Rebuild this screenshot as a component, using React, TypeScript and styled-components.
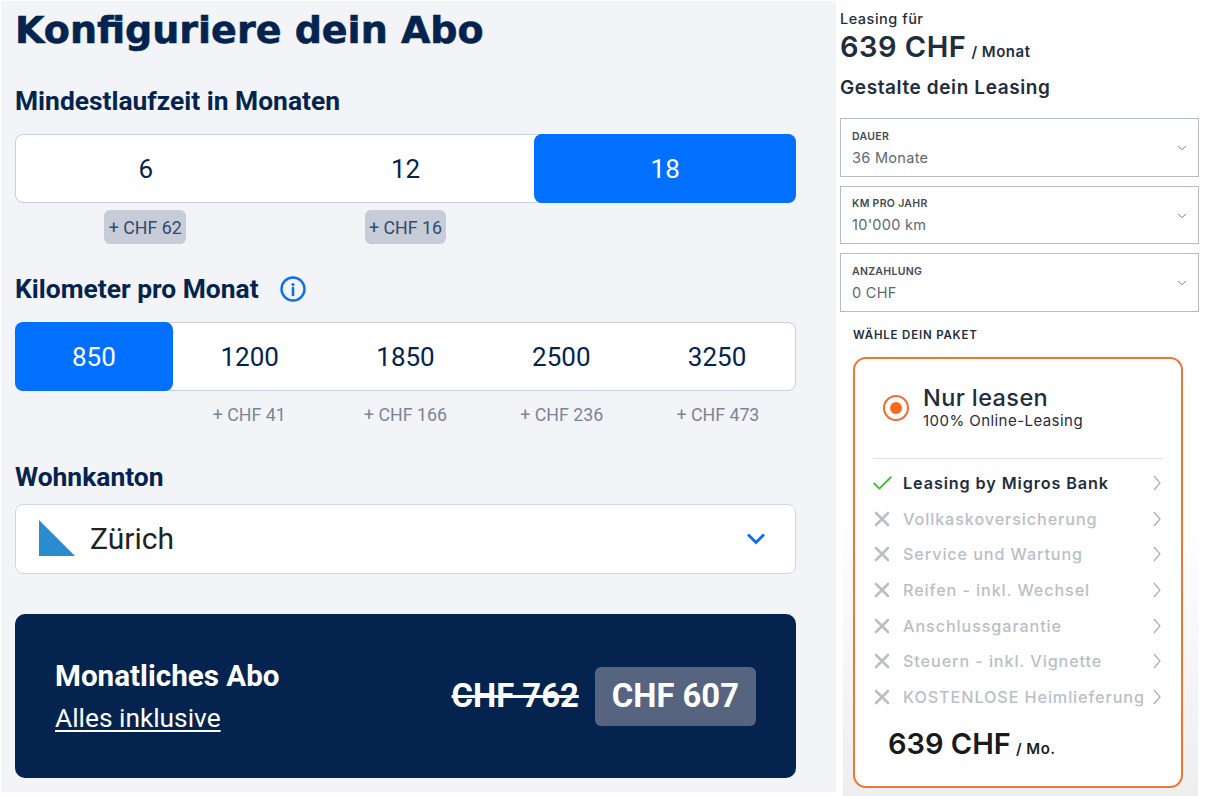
import { createGlobalStyle } from "styled-components";
import styled from "styled-components";
import { Check, ChevronDown, X } from "lucide-react";

const Global = createGlobalStyle`
  html, body {
    margin: 0;
    padding: 0;
    background: #fff;
  }
  * {
    box-sizing: border-box;
  }
`;

const Page = styled.div`
  width: 1206px;
  height: 796px;
  overflow: hidden;
  display: flex;
  align-items: flex-start;
  background: #fff;
`;

const Configurator = styled.section`
  width: 835px;
  height: 791px;
  margin: 1px 0 0 1px;
  padding: 0 40px 0 14px;
  background: #f2f4f8;
  color: #04244f;
  font-family: Roboto, sans-serif;
`;

const Title = styled.h1`
  margin: 0;
  height: 58px;
  font-family: "DejaVu Sans", sans-serif;
  font-size: 38px;
  line-height: 59px;
  font-weight: 700;
  -webkit-text-stroke: 0.6px #04244f;
  white-space: nowrap;
`;

const SectionTitle = styled.h2`
  display: flex;
  align-items: center;
  gap: 21px;
  margin: 0;
  height: 32px;
  font-size: 26.4px;
  line-height: 32px;
  font-weight: 700;
`;

const DurationBlock = styled.div`
  margin-top: 26px;
`;

const KilometerBlock = styled.div`
  margin-top: 29px;
`;

const CantonBlock = styled.div`
  margin-top: 29px;
`;

const Segments = styled.div<{ $count: number }>`
  display: grid;
  grid-template-columns: repeat(${(p) => p.$count}, 1fr);
  height: 69px;
  margin-top: 17px;
  background: #fff;
  border: 1px solid #c9ced8;
  border-radius: 8px;
`;

const Segment = styled.div<{ $active?: boolean }>`
  display: flex;
  align-items: center;
  justify-content: center;
  margin: ${(p) => (p.$active ? "-1px" : "0")};
  border-radius: 8px;
  font-size: 26px;
  background: ${(p) => (p.$active ? "#0270ff" : "transparent")};
  color: ${(p) => (p.$active ? "#fff" : "#04244f")};
`;

const Surcharges = styled.div<{ $count: number }>`
  display: grid;
  grid-template-columns: repeat(${(p) => p.$count}, 1fr);
  justify-items: center;
  height: 34px;
  margin-top: 7px;
`;

const Surcharge = styled.span<{ $badge?: boolean }>`
  display: flex;
  align-items: center;
  justify-content: center;
  height: ${(p) => (p.$badge ? "34px" : "32px")};
  padding: 0 4.5px;
  border-radius: 6px;
  font-size: 17.8px;
  background: ${(p) => (p.$badge ? "#c6ccd8" : "transparent")};
  color: ${(p) => (p.$badge ? "#33496c" : "#7b8596")};
`;

const CantonSelect = styled.div`
  display: flex;
  align-items: center;
  gap: 14px;
  height: 70px;
  margin-top: 11px;
  padding: 0 29px 2px 22px;
  background: #fff;
  border: 1px solid #d3d7de;
  border-radius: 8px;
  color: #222;
  font-size: 30px;
`;

const CantonName = styled.span`
  flex: 1;
`;

const Banner = styled.div`
  display: flex;
  align-items: center;
  justify-content: space-between;
  height: 164px;
  margin-top: 40px;
  padding: 0 40px;
  background: #04244f;
  border-radius: 10px;
  color: #fff;
`;

const BannerTitle = styled.div`
  font-size: 29.6px;
  line-height: 36px;
  font-weight: 700;
`;

const BannerLink = styled.a`
  display: inline-block;
  margin-top: 8px;
  font-size: 26.3px;
  line-height: 32px;
  text-decoration: underline;
  text-underline-offset: 3px;
`;

const Prices = styled.div`
  display: flex;
  align-items: center;
  gap: 16px;
`;

const OldPrice = styled.span`
  font-size: 32.8px;
  font-weight: 700;
  text-decoration: line-through;
`;

const NewPrice = styled.span`
  display: flex;
  align-items: center;
  height: 59px;
  padding: 0 17px;
  background: #56647f;
  border-radius: 6px;
  font-size: 32.8px;
  font-weight: 700;
`;

const Leasing = styled.aside`
  width: 370px;
  height: 796px;
  padding: 10px 0 0 4px;
  font-family: Inter, sans-serif;
  color: #1f2d3d;
`;

const LeasingLabel = styled.div`
  font-size: 14.5px;
  line-height: 17px;
  font-weight: 500;
  letter-spacing: 0.5px;
`;

const LeasingPrice = styled.div`
  margin-top: 2px;
  font-size: 29px;
  line-height: 36px;
  font-weight: 600;
  letter-spacing: 0.5px;
  white-space: nowrap;
`;

const PriceUnit = styled.span`
  margin-left: 5px;
  font-size: 15px;
  font-weight: 600;
  letter-spacing: 0.5px;
`;

const LeasingTitle = styled.div`
  margin-top: 5px;
  font-size: 19px;
  line-height: 26px;
  font-weight: 600;
  letter-spacing: 0.6px;
`;

const Dropdowns = styled.div`
  display: flex;
  flex-direction: column;
  gap: 9px;
  margin-top: 17px;
  width: 359px;
`;

const Dropdown = styled.div`
  display: flex;
  align-items: center;
  justify-content: space-between;
  height: 58.5px;
  padding: 2px 9px 0 11px;
  border: 1px solid #b6bcc4;
  color: #5d6874;
`;

const DropdownLabel = styled.div`
  font-size: 10.5px;
  line-height: 14px;
  font-weight: 600;
  letter-spacing: 0.3px;
  color: #3f4a56;
`;

const DropdownValue = styled.div`
  margin-top: 5px;
  font-size: 14.5px;
  line-height: 18px;
  letter-spacing: 0.3px;
`;

const PackagePanel = styled.div`
  width: 355px;
  height: 486px;
  margin: 0 0 0 3px;
  padding: 15px 15px 0 10px;
  background: linear-gradient(180deg, #ffffff 0%, #ffffff 40%, #eeeeee 100%);
`;

const PackageHeading = styled.div`
  height: 16px;
  font-size: 11.5px;
  line-height: 16px;
  font-weight: 600;
  letter-spacing: 0.8px;
  color: #1f2d3d;
`;

const PackageCard = styled.div`
  height: 431px;
  margin-top: 14px;
  padding: 0 19px 0 18px;
  background: #fff;
  border: 2px solid #ee7637;
  border-radius: 13px;
`;

const PackageHeader = styled.div`
  display: flex;
  align-items: center;
  gap: 14px;
  height: 100px;
  padding-left: 10px;
  border-bottom: 1px solid #dcdfe3;
`;

const Radio = styled.span`
  display: flex;
  align-items: center;
  justify-content: center;
  width: 26px;
  height: 26px;
  border: 2px solid #ef6c2a;
  border-radius: 50%;
  flex: none;
  &::after {
    content: "";
    width: 12px;
    height: 12px;
    border-radius: 50%;
    background: #fb6a1c;
  }
`;

const PackageName = styled.div`
  font-size: 23.5px;
  line-height: 24px;
  font-weight: 500;
  letter-spacing: 0.4px;
`;

const PackageSub = styled.div`
  font-size: 15px;
  line-height: 21px;
  letter-spacing: 0.45px;
`;

const Features = styled.ul`
  margin: 7px 0 0;
  padding: 0;
  list-style: none;
`;

const Feature = styled.li<{ $included?: boolean }>`
  display: flex;
  align-items: center;
  height: 35.6px;
  font-size: 16.2px;
  letter-spacing: 0.9px;
  font-weight: ${(p) => (p.$included ? 600 : 500)};
  color: ${(p) => (p.$included ? "#1f2d3d" : "#b9bfc6")};
  white-space: nowrap;
`;

const FeatureMark = styled.span`
  display: flex;
  align-items: center;
  justify-content: center;
  width: 26px;
  margin: 0 8px 0 -4px;
  flex: none;
`;

const FeatureName = styled.span`
  flex: 1;
`;

const CardPrice = styled.div`
  margin: 11px 0 0 15px;
  font-size: 29px;
  line-height: 36px;
  font-weight: 600;
  color: #1a1a1a;
`;

const months = [
    { value: "6", extra: "+ CHF 62" },
    { value: "12", extra: "+ CHF 16" },
    { value: "18", extra: "", active: true },
];

const kilometers = [
    { value: "850", extra: "", active: true },
    { value: "1200", extra: "+ CHF 41" },
    { value: "1850", extra: "+ CHF 166" },
    { value: "2500", extra: "+ CHF 236" },
    { value: "3250", extra: "+ CHF 473" },
];

const dropdowns = [
    { label: "DAUER", value: "36 Monate" },
    { label: "KM PRO JAHR", value: "10'000 km" },
    { label: "ANZAHLUNG", value: "0 CHF" },
];

const features = [
    "Leasing by Migros Bank",
    "Vollkaskoversicherung",
    "Service und Wartung",
    "Reifen - inkl. Wechsel",
    "Anschlussgarantie",
    "Steuern - inkl. Vignette",
    "KOSTENLOSE Heimlieferung",
];

function InfoIcon() {
    return (
        <svg width="26" height="26" viewBox="0 0 26 26" fill="none">
            <circle cx="13" cy="13" r="11.5" stroke="#0f6fe8" strokeWidth="2.4" />
            <circle cx="13" cy="8.4" r="1.5" fill="#0f6fe8" />
            <path d="M13 12v7" stroke="#0f6fe8" strokeWidth="2.6" strokeLinecap="round" />
        </svg>
    );
}

function ZurichFlag() {
    return (
        <svg width="38" height="38" viewBox="0 0 38 38">
            <rect width="38" height="38" fill="#fff" />
            <path d="M1 1L37 37H1Z" fill="#2a8ccf" />
        </svg>
    );
}

function SelectChevron() {
    return (
        <svg width="20" height="13" viewBox="0 0 20 13" fill="none">
            <path d="M2 2.5L10 10.5L18 2.5" stroke="#0f6fe8" strokeWidth="3" />
        </svg>
    );
}

function RowChevron() {
    return (
        <svg width="10" height="16" viewBox="0 0 10 16" fill="none">
            <path d="M2 1L8 8L2 15" stroke="#a9aeb5" strokeWidth="1.2" />
        </svg>
    );
}

export default function App() {
    return (
        <Page>
            <Global />
            <Configurator>
                <Title>Konfiguriere dein Abo</Title>

                <DurationBlock>
                    <SectionTitle>Mindestlaufzeit in Monaten</SectionTitle>
                    <Segments $count={3}>
                        {months.map((m) => (
                            <Segment key={m.value} $active={m.active}>{m.value}</Segment>
                        ))}
                    </Segments>
                    <Surcharges $count={3}>
                        {months.map((m) => (
                            <div key={m.value}>{m.extra && <Surcharge $badge>{m.extra}</Surcharge>}</div>
                        ))}
                    </Surcharges>
                </DurationBlock>

                <KilometerBlock>
                    <SectionTitle>Kilometer pro Monat <InfoIcon /></SectionTitle>
                    <Segments $count={5}>
                        {kilometers.map((k) => (
                            <Segment key={k.value} $active={k.active}>{k.value}</Segment>
                        ))}
                    </Segments>
                    <Surcharges $count={5}>
                        {kilometers.map((k) => (
                            <div key={k.value}>{k.extra && <Surcharge>{k.extra}</Surcharge>}</div>
                        ))}
                    </Surcharges>
                </KilometerBlock>

                <CantonBlock>
                    <SectionTitle>Wohnkanton</SectionTitle>
                    <CantonSelect>
                        <ZurichFlag />
                        <CantonName>Zürich</CantonName>
                        <SelectChevron />
                    </CantonSelect>
                </CantonBlock>

                <Banner>
                    <div>
                        <BannerTitle>Monatliches Abo</BannerTitle>
                        <BannerLink>Alles inklusive</BannerLink>
                    </div>
                    <Prices>
                        <OldPrice>CHF 762</OldPrice>
                        <NewPrice>CHF 607</NewPrice>
                    </Prices>
                </Banner>
            </Configurator>

            <Leasing>
                <LeasingLabel>Leasing für</LeasingLabel>
                <LeasingPrice>639 CHF<PriceUnit>/ Monat</PriceUnit></LeasingPrice>
                <LeasingTitle>Gestalte dein Leasing</LeasingTitle>

                <Dropdowns>
                    {dropdowns.map((d) => (
                        <Dropdown key={d.label}>
                            <div>
                                <DropdownLabel>{d.label}</DropdownLabel>
                                <DropdownValue>{d.value}</DropdownValue>
                            </div>
                            <ChevronDown size={14} strokeWidth={1.5} />
                        </Dropdown>
                    ))}
                </Dropdowns>

                <PackagePanel>
                    <PackageHeading>WÄHLE DEIN PAKET</PackageHeading>
                    <PackageCard>
                        <PackageHeader>
                            <Radio />
                            <div>
                                <PackageName>Nur leasen</PackageName>
                                <PackageSub>100% Online-Leasing</PackageSub>
                            </div>
                        </PackageHeader>
                        <Features>
                            {features.map((f, i) => (
                                <Feature key={f} $included={i === 0}>
                                    <FeatureMark>
                                        {i === 0
                                            ? <Check size={25} strokeWidth={1.8} color="#4cb748" />
                                            : <X size={24} strokeWidth={2.6} color="#b9bfc6" />}
                                    </FeatureMark>
                                    <FeatureName>{f}</FeatureName>
                                    <RowChevron />
                                </Feature>
                            ))}
                        </Features>
                        <CardPrice>639 CHF<PriceUnit>/ Mo.</PriceUnit></CardPrice>
                    </PackageCard>
                </PackagePanel>
            </Leasing>
        </Page>
    );
}
